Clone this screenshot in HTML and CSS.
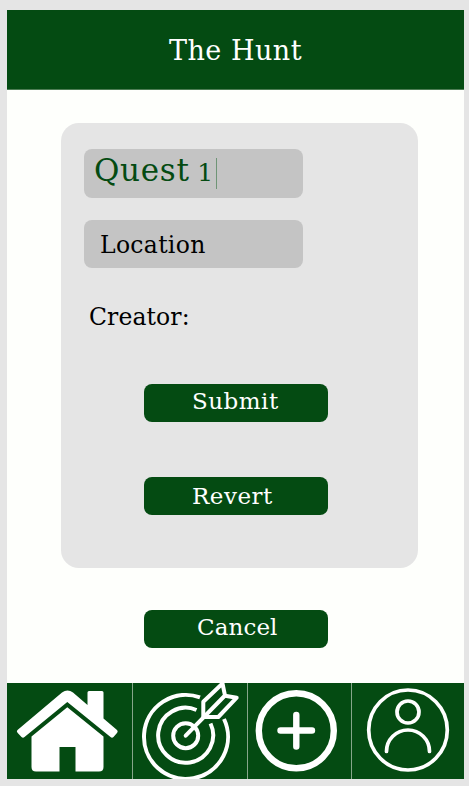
FILE: index.html
```html
<!DOCTYPE html>
<html lang="en">
<head>
<meta charset="utf-8">
<title>The Hunt</title>
<link rel="stylesheet" href="styles.css">
</head>
<body>
<div class="app">
  <header class="header"><h1 class="title">The Hunt</h1></header>
  <main class="main">
    <form class="card">
      <div class="field field-name"><span class="name">Quest <span class="digit">1</span></span><span class="caret"></span></div>
      <div class="field field-location"><span class="location">Location</span></div>
      <div class="creator"><span class="creator-text">Creator:</span></div>
      <button type="button" class="btn submit"><span>Submit</span></button>
      <button type="button" class="btn revert"><span>Revert</span></button>
    </form>
    <button type="button" class="btn cancel"><span>Cancel</span></button>
  </main>
  <nav class="nav">
    <a class="tab"><svg viewBox="0 675 125 104" width="125" height="104" aria-label="Home">
      <g transform="translate(-7 0)" fill="#fff">
        <path d="M17.500 730 L62 692.500 Q67.500 688.500 73 692.500 L87.500 705 V692.500 Q87.500 691 89 691 H102 Q103.500 691 103.500 692.500 V718.500 L117 730 Q118.300 731.300 117.200 732.700 L113.500 737 Q112 738.500 110.500 737 L67.300 702 L24.500 737 Q23 738.500 21.500 737 L17.500 732.700 Q16.200 731.300 17.500 730Z"/>
        <path d="M67.300 707.300 L103.500 736.500 V767 Q103.500 771.500 99 771.500 H75.500 V747 H59.500 V771.500 H36 Q31.500 771.500 31.500 767 V736.500Z"/>
      </g></svg></a>
    <a class="tab"><svg viewBox="0 675 114 104" width="114" height="104" aria-label="Quests">
      <g transform="translate(-133 0)" fill="none" stroke="#fff" stroke-width="4" stroke-linejoin="round">
        <path d="M200 697.300 A42 42 0 1 0 224 719"/>
        <path d="M196.500 710 A27.500 27.500 0 1 0 210.500 723.500"/>
        <circle cx="185.700" cy="735.700" r="12.500"/>
        <path d="M185.700 735.700 L224 696.500" stroke-linecap="round"/>
        <path d="M203.300 717 L203.300 701.700 L222.500 683.500 L225 695.700 L236.700 697.700 L218.300 717 Z"/>
      </g></svg></a>
    <a class="tab"><svg viewBox="0 675 103 104" width="103" height="104" aria-label="Add">
      <g transform="translate(-248 0)" fill="none" stroke="#fff" stroke-width="6.400" stroke-linecap="round">
        <circle cx="296.300" cy="730.800" r="37.500"/>
        <path d="M280.500 730.500 H312 M296.300 715 V746.500"/>
      </g></svg></a>
    <a class="tab"><svg viewBox="0 675 112 104" width="112" height="104" aria-label="Profile">
      <g transform="translate(-352 0)" fill="none" stroke="#fff" stroke-width="3.700" stroke-linecap="round">
        <ellipse cx="408" cy="730" rx="39.300" ry="40"/>
        <circle cx="408" cy="712" r="11"/>
        <path d="M386.500 751.500 A21.500 21.500 0 0 1 429.500 751.500"/>
      </g></svg></a>
  </nav>
</div>
</body>
</html>
```
FILE: styles.css
```css
* { box-sizing: border-box; }
body {
  margin: 0;
  height: 786px;
  padding: 10px 5px 7px 7px;
  background: #e5e5e5;
  font-family: "DejaVu Serif", serif;
  overflow: hidden;
}
.app {
  display: flex;
  flex-direction: column;
  width: 457px;
  height: 769px;
  background: #fefffc;
}
.header {
  height: 80px;
  display: flex;
  justify-content: center;
  background: #044b12;
  color: #fff;
  border-bottom: 1px solid #4d7d54;
}
.title { margin: 0; font-size: 27px; font-weight: 400; line-height: 82px; letter-spacing: 0.5px; white-space: nowrap; }
.main {
  height: 593px;
  padding: 33px 0 0 54px;
}
.card {
  width: 357px;
  height: 445px;
  padding: 26px 23px;
  border-radius: 18px;
  background: #e5e5e5;
}
.field {
  width: 219px;
  height: 49px;
  display: flex;
  align-items: center;
  border-radius: 8px;
  background: #c4c4c4;
}
.field-name { padding-left: 10px; color: #044b12; font-size: 31px; }
.name { width: 118px; line-height: 40px; margin-top: -4px; letter-spacing: 0.7px; word-spacing: -3px; white-space: nowrap; }
.digit { font-size: 25px; letter-spacing: 0; }
.caret { width: 1px; height: 31px; margin-left: 4px; background: #6f9576; }
.field-location { margin-top: 22px; height: 48px; padding: 2px 0 0 16px; font-size: 23.5px; letter-spacing: 0.3px; }
.creator { margin-top: 32px; height: 32px; padding-left: 5px; font-size: 23.5px; line-height: 35px; letter-spacing: 0.1px; }
.btn {
  display: flex;
  width: 183.5px;
  height: 38px;
  padding: 0 0 0 48px;
  border: 0;
  border-radius: 8px;
  background: #044b12;
  color: #fff;
  font-family: inherit;
  font-size: 23px;
  line-height: 34px;
  letter-spacing: 0.5px;
}
.submit { margin: 52px 0 0 60px; }
.revert { margin: 55px 0 0 60px; line-height: 38px; }
.cancel { margin: 42px 0 0 83px; padding-left: 53px; letter-spacing: 0.1px; }
.nav {
  display: grid;
  grid-template-columns: 125px 114px 103px 112px;
  column-gap: 1px;
  height: 96px;
  background: #86a68a;
}
.tab { background: #044b12; height: 96px; display: flex; align-items: flex-end; }
.tab svg { display: block; flex: none; }
```
